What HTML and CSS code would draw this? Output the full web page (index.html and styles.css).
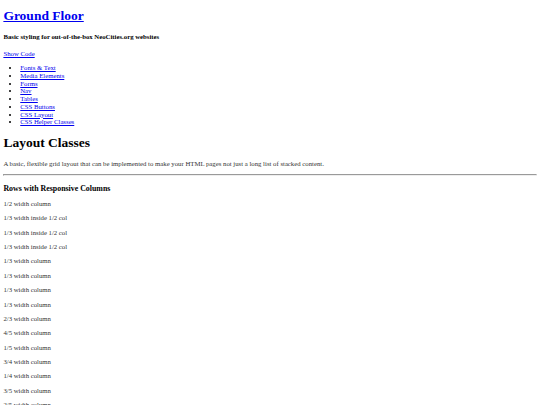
FILE: index.html
```html
<!DOCTYPE html>
<html>
<head>
<meta charset="utf-8">
<title>Ground Floor</title>
<link rel="stylesheet" href="styles.css">
</head>
<body>
<h1 class="site-title"><a href="#">Ground Floor</a></h1>
<h4 class="tagline">Basic styling for out-of-the-box NeoCities.org websites</h4>
<a href="#" class="show-code">Show Code</a>
<ul class="toc">
  <li><a href="#">Fonts &amp; Text</a></li>
  <li><a href="#">Media Elements</a></li>
  <li><a href="#">Forms</a></li>
  <li><a href="#">Nav</a></li>
  <li><a href="#">Tables</a></li>
  <li><a href="#">CSS Buttons</a></li>
  <li><a href="#">CSS Layout</a></li>
  <li><a href="#">CSS Helper Classes</a></li>
</ul>
<h1>Layout Classes</h1>
<p>A basic, flexible grid layout that can be implemented to make your HTML pages not just a long list of stacked content.</p>
<hr>
<h3 class="section-title">Rows with Responsive Columns</h3>
<div class="row">
  <div class="col"><p>1/2 width column</p></div>
  <div class="col">
    <div class="row">
      <div class="col"><p>1/3 width inside 1/2 col</p></div>
      <div class="col"><p>1/3 width inside 1/2 col</p></div>
      <div class="col"><p>1/3 width inside 1/2 col</p></div>
    </div>
  </div>
</div>
<div class="row">
  <div class="col"><p>1/3 width column</p></div>
  <div class="col"><p>1/3 width column</p></div>
  <div class="col"><p>1/3 width column</p></div>
</div>
<div class="row">
  <div class="col"><p>1/3 width column</p></div>
  <div class="col"><p>2/3 width column</p></div>
</div>
<div class="row">
  <div class="col"><p>4/5 width column</p></div>
  <div class="col"><p>1/5 width column</p></div>
</div>
<div class="row">
  <div class="col"><p>3/4 width column</p></div>
  <div class="col"><p>1/4 width column</p></div>
</div>
<div class="row">
  <div class="col"><p>3/5 width column</p></div>
  <div class="col"><p>2/5 width column</p></div>
</div>
</body>
</html>
```
FILE: styles.css
```css
html {
  zoom: 0.421875;
}
body {
  font-family: "Liberation Serif", "Times New Roman", serif;
  line-height: 1.15;
  color: #000;
  background: #fff;
}
a {
  color: #0000ee;
}
p {
  color: #333;
}
.site-title {
  margin-top: 12px;
}
.section-title {
  margin-bottom: 10px;
}
.row p {
  line-height: 1.13;
}
```
